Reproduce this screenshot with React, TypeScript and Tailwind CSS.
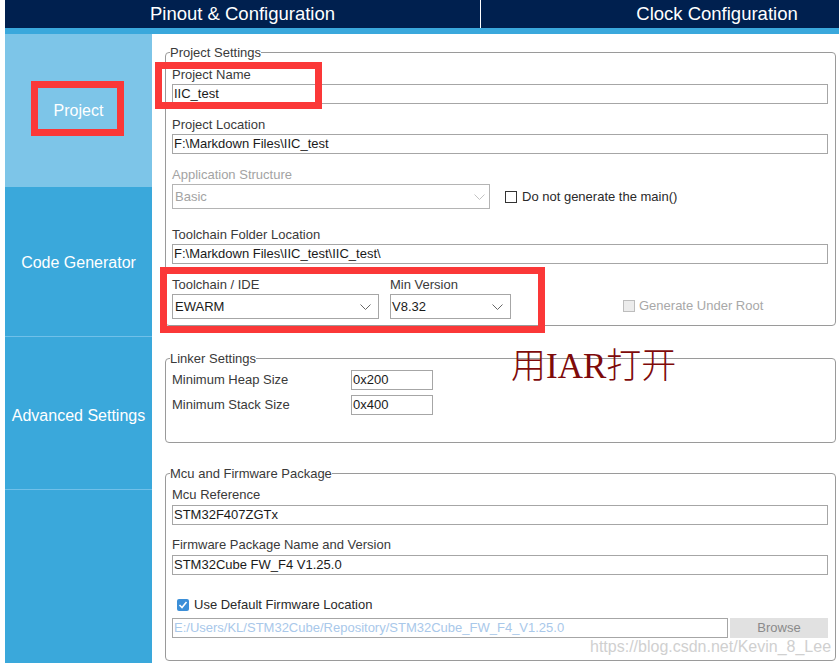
import React from "react";

const Chevron = ({ color = "#666" }: { color?: string }) => (
  <svg width="11" height="6" viewBox="0 0 11 6" fill="none">
    <polyline points="0.5,0.5 5.5,5.5 10.5,0.5" stroke={color} strokeWidth="1" />
  </svg>
);

const Label = ({ children, muted }: { children: React.ReactNode; muted?: boolean }) => (
  <div className={muted ? "h-[15px] leading-[15px] text-[13px] text-[#a3a3a3]" : "h-[15px] leading-[15px] text-[13px] text-[#3a3a3a]"}>
    {children}
  </div>
);

const TextBox = ({ value }: { value: string }) => (
  <div className="h-[20px] border border-[#a6a6a6] bg-white flex items-center px-[1px] text-[13px] text-[#1a1a1a] whitespace-nowrap overflow-hidden">
    {value}
  </div>
);

export default function App() {
  return (
    <div className="relative w-[839px] h-[663px] overflow-hidden bg-white pl-[5px] font-['Liberation_Sans',Arial,sans-serif]">
      {/* Header tabs */}
      <div className="h-[28px] bg-[#00204f] flex overflow-hidden">
        <div className="w-[476px] shrink-0 flex items-center justify-center text-white text-[18.5px] border-r border-white">
          Pinout &amp; Configuration
        </div>
        <div className="w-[472px] shrink-0 flex items-center justify-center text-white text-[18.5px]">
          Clock Configuration
        </div>
      </div>
      <div className="h-[6px] bg-[#3aa8dc]" />

      <div className="flex h-[629px]">
        {/* Sidebar */}
        <div className="w-[147px] shrink-0 bg-[#3aa8db] flex flex-col text-white text-[16px]">
          <div className="h-[153px] bg-[#7dc5e8] flex items-center justify-center">Project</div>
          <div className="h-[150px] pt-[3px] flex items-center justify-center border-b border-[#70c0e9]">Code Generator</div>
          <div className="h-[153px] pt-[6px] flex items-center justify-center border-b border-[#70c0e9]">Advanced Settings</div>
          <div className="flex-1" />
        </div>

        {/* Content */}
        <div className="flex-1 pl-[13px] pr-[3px] pt-[11px] flex flex-col">
          {/* Project Settings */}
          <fieldset className="border border-[#9a9a9a] rounded-[4px] pl-[6px] pr-[7px] pt-[7px] pb-[6px]">
            <legend className="text-[13px] leading-[15px] text-[#3a3a3a] -ml-[2px]">Project Settings</legend>
            <Label>Project Name</Label>
            <div className="mt-[2px]">
              <TextBox value="IIC_test" />
            </div>

            <div className="mt-[13px]">
              <Label>Project Location</Label>
              <div className="mt-[2px]">
                <TextBox value="F:\Markdown Files\IIC_test" />
              </div>
            </div>

            <div className="mt-[13px]">
              <Label muted>Application Structure</Label>
              <div className="mt-[2px] flex items-center">
                <div className="w-[318px] h-[25px] border border-[#b4b4b4] bg-white flex items-center justify-between pl-[2px] pr-[4px] text-[13px] text-[#a3a3a3]">
                  <span>Basic</span>
                  <Chevron color="#c2c2c2" />
                </div>
                <div className="ml-[15px] flex items-center">
                  <div className="w-[12px] h-[12px] border border-[#333] bg-white" />
                  <span className="ml-[5px] text-[13px] text-[#2a2a2a]">Do not generate the main()</span>
                </div>
              </div>
            </div>

            <div className="mt-[18px]">
              <Label>Toolchain Folder Location</Label>
              <div className="mt-[2px]">
                <TextBox value="F:\Markdown Files\IIC_test\IIC_test\" />
              </div>
            </div>

            <div className="mt-[13px] flex items-start">
              <div className="w-[207px]">
                <Label>Toolchain / IDE</Label>
                <div className="mt-[2px] h-[25px] border border-[#a6a6a6] bg-white flex items-center justify-between pl-[2px] pr-[7px] text-[13px] text-[#1a1a1a]">
                  <span>EWARM</span>
                  <Chevron />
                </div>
              </div>
              <div className="w-[121px] ml-[11px]">
                <Label>Min Version</Label>
                <div className="mt-[2px] h-[25px] border border-[#a6a6a6] bg-white flex items-center justify-between pl-[1px] pr-[7px] text-[13px] text-[#1a1a1a]">
                  <span>V8.32</span>
                  <Chevron />
                </div>
              </div>
              <div className="ml-[112px] mt-[19px] flex items-center">
                <div className="w-[12px] h-[12px] border border-[#bdbdbd] bg-[#ececec]" />
                <span className="ml-[4px] text-[13px] text-[#a8a8a8]">Generate Under Root</span>
              </div>
            </div>
          </fieldset>

          {/* Linker Settings */}
          <fieldset className="mt-[25px] border border-[#9a9a9a] rounded-[4px] pl-[6px] pr-[7px] pt-[4px] pb-[27px]">
            <legend className="text-[13px] leading-[15px] text-[#3a3a3a] -ml-[2px]">Linker Settings</legend>
            <div className="flex items-center h-[20px]">
              <span className="w-[179px] text-[13px] text-[#3a3a3a]">Minimum Heap Size</span>
              <div className="w-[82px]">
                <TextBox value="0x200" />
              </div>
            </div>
            <div className="mt-[5px] flex items-center h-[20px]">
              <span className="w-[179px] text-[13px] text-[#3a3a3a]">Minimum Stack Size</span>
              <div className="w-[82px]">
                <TextBox value="0x400" />
              </div>
            </div>
          </fieldset>

          {/* Mcu and Firmware Package */}
          <fieldset className="mt-[23px] border border-[#9a9a9a] rounded-[4px] pl-[6px] pr-[7px] pt-[6px] pb-[22px]">
            <legend className="text-[13px] leading-[15px] text-[#3a3a3a] -ml-[2px]">Mcu and Firmware Package</legend>
            <Label>Mcu Reference</Label>
            <div className="mt-[3px]">
              <TextBox value="STM32F407ZGTx" />
            </div>
            <div className="mt-[12px]">
              <Label>Firmware Package Name and Version</Label>
              <div className="mt-[3px]">
                <TextBox value="STM32Cube FW_F4 V1.25.0" />
              </div>
            </div>
            <div className="mt-[22px] flex items-center h-[15px] pl-[5px]">
              <div className="w-[12px] h-[12px] rounded-[2px] bg-[#3c8fd8] flex items-center justify-center">
                <svg width="10" height="10" viewBox="0 0 10 10" fill="none">
                  <polyline points="1.5,5 4,7.5 8.5,2" stroke="white" strokeWidth="1.6" />
                </svg>
              </div>
              <span className="ml-[5px] text-[13px] text-[#2a2a2a]">Use Default Firmware Location</span>
            </div>
            <div className="mt-[6px] flex items-center">
              <div className="w-[556px] h-[20px] border border-[#a6a6a6] bg-white flex items-center px-[1px] text-[13px] text-[#a9c8ea] whitespace-nowrap overflow-hidden">
                E:/Users/KL/STM32Cube/Repository/STM32Cube_FW_F4_V1.25.0
              </div>
              <div className="ml-[2px] w-[98px] h-[20px] bg-[#e1e1e1] flex items-center justify-center text-[13px] text-[#8a8a8a]">
                Browse
              </div>
            </div>
          </fieldset>
        </div>
      </div>

      {/* Annotations */}
      <div className="absolute left-[31px] top-[81px] w-[93px] h-[55px] border-[7px] border-[#fb3838]" />
      <div className="absolute left-[155px] top-[62px] w-[167px] h-[47px] border-[7px] border-[#fb3838]" />
      <div className="absolute left-[160px] top-[267px] w-[385px] h-[66px] border-[7px] border-[#fb3838]" />
      <div className="absolute left-[511px] top-[349px] text-[35px] leading-[36px] font-light text-[#7e0a0a] font-['Liberation_Serif','Noto_Sans_CJK_SC',serif] whitespace-nowrap">
        用IAR打开
      </div>
      <div className="absolute left-[590px] top-[637px] text-[16px] leading-[20px] text-[#d0d0d0] whitespace-nowrap [text-shadow:0_0_2px_white]">
        https://blog.csdn.net/Kevin_8_Lee
      </div>
    </div>
  );
}
